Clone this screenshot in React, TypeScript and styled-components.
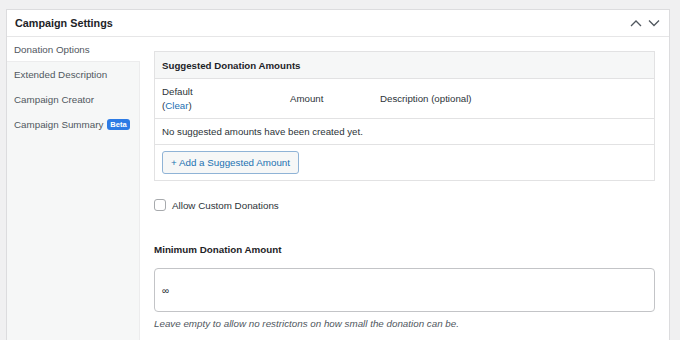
import React from 'react';
import styled, { createGlobalStyle } from 'styled-components';

const GlobalStyle = createGlobalStyle`
  html, body {
    margin: 0;
    padding: 0;
    background: #f0f0f1;
    font-family: "Liberation Sans", Arial, sans-serif;
    color: #1d2327;
  }
  * { box-sizing: border-box; }
`;

const Page = styled.div`
  width: 680px;
  height: 340px;
  overflow: hidden;
  padding: 9px 10px 0 6px;
`;

const Panel = styled.div`
  background: #fff;
  border: 1px solid #dcdcde;
  border-bottom: none;
  height: 340px;
`;

const Header = styled.div`
  height: 27px;
  display: flex;
  align-items: center;
  justify-content: space-between;
  padding: 0 9px 0 8px;
  border-bottom: 1px solid #e6e6e7;
`;

const Title = styled.h2`
  margin: 0;
  font-size: 10.8px;
  font-weight: bold;
  color: #1d2327;
`;

const Toggles = styled.div`
  display: flex;
  gap: 6px;
  align-items: center;
`;

const Body = styled.div`
  display: flex;
  height: 100%;
`;

const Nav = styled.ul`
  list-style: none;
  margin: 0;
  padding: 0;
  width: 133px;
  background: #f6f7f7;
  border-right: 1px solid #ececed;
  flex-shrink: 0;
`;

const NavItem = styled.li<{ $active?: boolean }>`
  height: 25px;
  display: flex;
  align-items: center;
  gap: 4px;
  padding: 0 7px;
  font-size: 9.8px;
  white-space: nowrap;
  color: #50575e;
  background: ${p => (p.$active ? '#fff' : 'transparent')};
  border-bottom: ${p => (p.$active ? '1px solid #ececed' : 'none')};
  margin-right: ${p => (p.$active ? '-1px' : '0')};
`;

const Badge = styled.span`
  background: #2d7be5;
  color: #fff;
  font-size: 7.5px;
  font-weight: bold;
  padding: 1px 3px;
  border-radius: 3px;
  line-height: 9px;
`;

const Content = styled.div`
  flex: 1;
  padding: 14px 14px 0 14px;
`;

const Table = styled.div`
  border: 1px solid #e2e2e3;
  font-size: 9.7px;
  color: #2c3338;
`;

const TableHead = styled.div`
  height: 27px;
  background: #f6f7f7;
  display: flex;
  align-items: center;
  padding: 0 7px;
  font-weight: bold;
  color: #1d2327;
  border-bottom: 1px solid #e2e2e3;
`;

const Row = styled.div<{ $h: number }>`
  height: ${p => p.$h}px;
  display: flex;
  align-items: center;
  padding: 0 7px;
  border-bottom: 1px solid #e2e2e3;
  &:last-child { border-bottom: none; }
`;

const Cell = styled.div<{ $w?: number }>`
  width: ${p => (p.$w ? `${p.$w}px` : 'auto')};
  line-height: 14px;
`;

const Link = styled.a`
  color: #2271b1;
  text-decoration: none;
`;

const Button = styled.button`
  height: 23px;
  padding: 0 8px;
  font-family: inherit;
  font-size: 9.8px;
  color: #2271b1;
  background: #f6f7f7;
  border: 1px solid #8fb3d6;
  border-radius: 3px;
`;

const CheckRow = styled.label`
  display: flex;
  align-items: center;
  gap: 6px;
  margin-top: 18px;
  font-size: 9.8px;
  color: #2c3338;
`;

const Box = styled.span`
  width: 12px;
  height: 12px;
  border: 1px solid #a7aaad;
  border-radius: 3px;
  background: #fff;
`;

const FieldLabel = styled.div`
  margin-top: 33px;
  font-size: 9.8px;
  font-weight: bold;
  color: #1d2327;
`;

const Input = styled.div`
  margin-top: 13px;
  height: 44px;
  border: 1px solid #c3c4c7;
  border-radius: 4px;
  display: flex;
  align-items: center;
  padding: 0 7px;
  font-size: 10px;
  color: #2c3338;
`;

const Help = styled.p`
  margin: 6px 0 0;
  font-size: 9.8px;
  font-style: italic;
  color: #50575e;
`;

const Chevron = ({ up }: { up?: boolean }) => (
  <svg width="12" height="8" viewBox="0 0 12 8" fill="none" stroke="#50575e" strokeWidth="1.3">
    <path d={up ? 'M1 7 L6 2 L11 7' : 'M1 1.5 L6 6.5 L11 1.5'} />
  </svg>
);

export default function App() {
  return (
    <>
      <GlobalStyle />
      <Page>
        <Panel>
          <Header>
            <Title>Campaign Settings</Title>
            <Toggles>
              <Chevron up />
              <Chevron />
            </Toggles>
          </Header>
          <Body>
            <Nav>
              <NavItem $active>Donation Options</NavItem>
              <NavItem>Extended Description</NavItem>
              <NavItem>Campaign Creator</NavItem>
              <NavItem>
                Campaign Summary <Badge>Beta</Badge>
              </NavItem>
            </Nav>
            <Content>
              <Table>
                <TableHead>Suggested Donation Amounts</TableHead>
                <Row $h={40}>
                  <Cell $w={128}>
                    Default
                    <br />(<Link href="#">Clear</Link>)
                  </Cell>
                  <Cell $w={90}>Amount</Cell>
                  <Cell>Description (optional)</Cell>
                </Row>
                <Row $h={26}>No suggested amounts have been created yet.</Row>
                <Row $h={35}>
                  <Button>+ Add a Suggested Amount</Button>
                </Row>
              </Table>
              <CheckRow>
                <Box />
                Allow Custom Donations
              </CheckRow>
              <FieldLabel>Minimum Donation Amount</FieldLabel>
              <Input>∞</Input>
              <Help>Leave empty to allow no restrictons on how small the donation can be.</Help>
            </Content>
          </Body>
        </Panel>
      </Page>
    </>
  );
}
